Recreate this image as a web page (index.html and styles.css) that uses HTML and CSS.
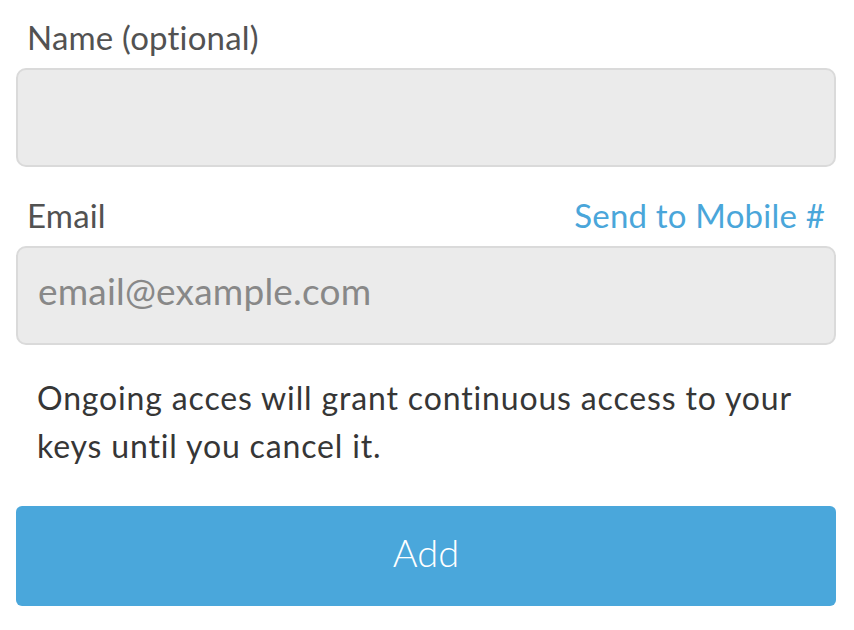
FILE: index.html
```html
<!DOCTYPE html>
<html>
<head>
<meta charset="utf-8">
<link rel="stylesheet" href="styles.css">
</head>
<body>
<form class="form">
  <div class="field field-name">
    <div class="label-row"><label class="label">Name (optional)</label></div>
    <input class="input" type="text">
  </div>
  <div class="field field-email">
    <div class="label-row">
      <label class="label">Email</label>
      <a class="link" href="#">Send to Mobile #</a>
    </div>
    <input class="input" type="text" placeholder="email@example.com">
  </div>
  <p class="note">Ongoing acces will grant continuous access to your keys until you cancel it.</p>
  <button class="btn" type="button">Add</button>
</form>
</body>
</html>
```
FILE: styles.css
```css
html, body {
  margin: 0;
  padding: 0;
  background: #fff;
}
body {
  font-family: Lato, "Open Sans", sans-serif;
}
.form {
  width: 820px;
  padding: 0 0 0 16px;
  display: flex;
  flex-direction: column;
}
.field {
  display: flex;
  flex-direction: column;
  gap: 11px;
}
.field-name {
  padding-top: 17px;
}
.field-email {
  margin-top: 28px;
}
.label-row {
  display: flex;
  justify-content: space-between;
  align-items: baseline;
  padding: 0 11px 0 11px;
}
.label {
  font-size: 33px;
  letter-spacing: 0.2px;
  color: #525252;
  line-height: 40px;
}
.link {
  font-size: 33px;
  line-height: 40px;
  letter-spacing: 0.2px;
  color: #4aa6da;
  text-decoration: none;
}
.input {
  height: 99px;
  box-sizing: border-box;
  border: 2px solid #dadada;
  border-radius: 10px;
  background: #ebebeb;
  padding: 0 20px 10px 20px;
  font-family: Lato, "Open Sans", sans-serif;
  font-size: 37px;
  letter-spacing: 0.2px;
  color: #444;
  outline: none;
}
.input::placeholder {
  color: #888;
}
.note {
  margin: 29px 0 0 0;
  padding: 0 21px;
  font-size: 32px;
  letter-spacing: 0.85px;
  line-height: 48px;
  color: #363636;
}
.btn {
  margin-top: 36px;
  height: 100px;
  border: none;
  border-radius: 6px;
  background: #4aa7db;
  color: #fff;
  font-family: Lato, "Open Sans", sans-serif;
  font-weight: 300;
  font-size: 38px;
  padding: 0 0 8px 0;
}
```
